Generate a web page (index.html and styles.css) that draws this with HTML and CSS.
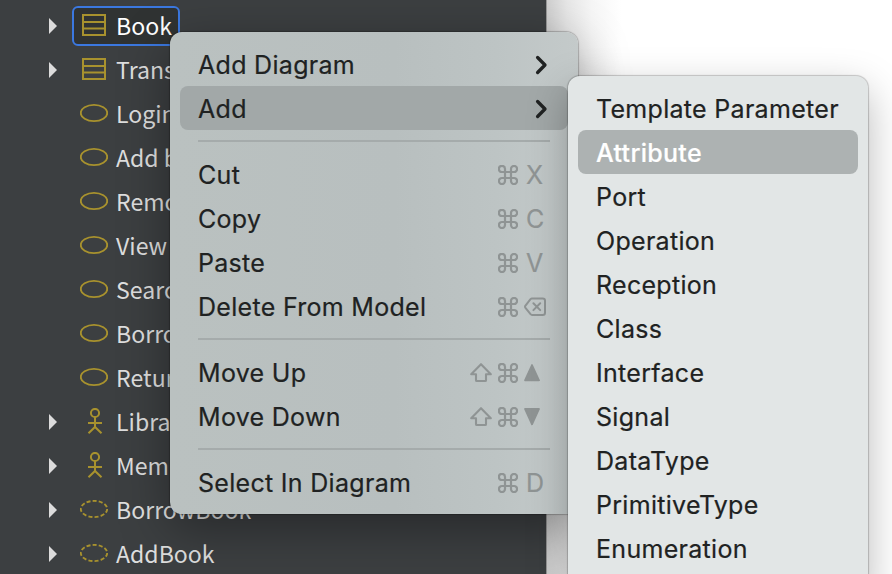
FILE: index.html
```html
<!DOCTYPE html>
<html lang="en">
<head>
<meta charset="utf-8">
<title>Model Explorer</title>
<link rel="stylesheet" href="styles.css">
</head>
<body>
<svg class="defs" aria-hidden="true">
  <symbol id="class" viewBox="0 0 28 28"><path d="M3 3H25V23H3ZM3 10H25M3 16.500H25" fill="none" stroke="currentColor" stroke-width="2"/></symbol>
  <symbol id="usecase" viewBox="0 0 28 28"><ellipse cx="14" cy="13" rx="13.200" ry="8.100" fill="none" stroke="currentColor" stroke-width="1.900"/></symbol>
  <symbol id="collab" viewBox="0 0 28 28"><ellipse cx="14" cy="13" rx="13.200" ry="8.100" fill="none" stroke="currentColor" stroke-width="1.900" stroke-dasharray="4 2.150"/></symbol>
  <symbol id="actor" viewBox="0 0 28 28"><g fill="none" stroke="currentColor" stroke-width="2"><circle cx="15" cy="5" r="4.100"/><path d="M15 9V19M8 15H22M8.500 25.300L15 19L21.500 25.300"/></g></symbol>
  <symbol id="cmd" viewBox="0 0 20 20"><path d="M7 7V3.900A3.050 3.050 0 1 0 3.950 7H16.050A3.050 3.050 0 1 0 13 3.950V16.050A3.050 3.050 0 1 0 16.050 13H3.950A3.050 3.050 0 1 0 7 16.050Z" fill="none" stroke="currentColor" stroke-width="2.200"/></symbol>
  <symbol id="shift" viewBox="0 0 22 20"><path d="M11 1.200L20.800 11.200H16V17.200Q16 18 15.200 18H6.800Q6 18 6 17.200V11.200H1.200Z" fill="none" stroke="currentColor" stroke-width="2.100" stroke-linejoin="round"/></symbol>
  <symbol id="del" viewBox="0 0 22 20"><path d="M8 1.400H18.700Q21 1.400 21 3.700V15.700Q21 18 18.700 18H8Q7.200 18 6.500 17.200L1.300 10.600Q.7 9.700 1.300 8.800L6.500 2.200Q7.200 1.400 8 1.400Z" fill="none" stroke="currentColor" stroke-width="2"/><path d="M9.400 6.300L16.200 13.100M16.200 6.300L9.400 13.100" stroke="currentColor" stroke-width="2" stroke-linecap="round"/></symbol>
  <symbol id="up" viewBox="0 0 16 20"><path d="M8 2L15 17.300H1Z" fill="currentColor" stroke="currentColor" stroke-linejoin="round" stroke-width="1.800"/></symbol>
  <symbol id="down" viewBox="0 0 16 20"><path d="M8 17.300L15 2H1Z" fill="currentColor" stroke="currentColor" stroke-linejoin="round" stroke-width="1.800"/></symbol>
  <symbol id="chev" viewBox="0 0 14 20"><path d="M3.600 2.500L11 10L3.600 17.500" fill="none" stroke="currentColor" stroke-width="3.300" stroke-linecap="round" stroke-linejoin="round"/></symbol>
</svg>
<div class="app">
  <div class="tree">
    <div class="row"><i class="arrow"></i><div class="node selected"><svg><use href="#class"/></svg><span>Book</span></div></div>
    <div class="row"><i class="arrow"></i><div class="node"><svg><use href="#class"/></svg><span>Trans</span></div></div>
    <div class="row"><i class="arrow leaf"></i><div class="node"><svg><use href="#usecase"/></svg><span>Login</span></div></div>
    <div class="row"><i class="arrow leaf"></i><div class="node"><svg><use href="#usecase"/></svg><span>Add b</span></div></div>
    <div class="row"><i class="arrow leaf"></i><div class="node"><svg><use href="#usecase"/></svg><span>Remo</span></div></div>
    <div class="row"><i class="arrow leaf"></i><div class="node"><svg><use href="#usecase"/></svg><span>View</span></div></div>
    <div class="row"><i class="arrow leaf"></i><div class="node"><svg><use href="#usecase"/></svg><span>Searc</span></div></div>
    <div class="row"><i class="arrow leaf"></i><div class="node"><svg><use href="#usecase"/></svg><span>Borro</span></div></div>
    <div class="row"><i class="arrow leaf"></i><div class="node"><svg><use href="#usecase"/></svg><span>Retur</span></div></div>
    <div class="row"><i class="arrow"></i><div class="node"><svg><use href="#actor"/></svg><span>Libra</span></div></div>
    <div class="row"><i class="arrow"></i><div class="node"><svg><use href="#actor"/></svg><span>Mem</span></div></div>
    <div class="row"><i class="arrow"></i><div class="node"><svg><use href="#collab"/></svg><span>BorrowBook</span></div></div>
    <div class="row"><i class="arrow"></i><div class="node"><svg><use href="#collab"/></svg><span>AddBook</span></div></div>
  </div>
  <div class="canvas"></div>
</div>

<div class="menu main">
  <div class="item"><span>Add Diagram</span><svg class="chev"><use href="#chev"/></svg></div>
  <div class="item open"><span>Add</span><svg class="chev"><use href="#chev"/></svg></div>
  <hr>
  <div class="item"><span>Cut</span><div class="keys"><svg class="cmd"><use href="#cmd"/></svg><b>X</b></div></div>
  <div class="item"><span>Copy</span><div class="keys"><svg class="cmd"><use href="#cmd"/></svg><b>C</b></div></div>
  <div class="item"><span>Paste</span><div class="keys"><svg class="cmd"><use href="#cmd"/></svg><b>V</b></div></div>
  <div class="item"><span>Delete From Model</span><div class="keys"><svg class="cmd"><use href="#cmd"/></svg><svg class="del"><use href="#del"/></svg></div></div>
  <hr>
  <div class="item"><span>Move Up</span><div class="keys"><svg class="shift"><use href="#shift"/></svg><svg class="cmd"><use href="#cmd"/></svg><svg class="tri"><use href="#up"/></svg></div></div>
  <div class="item"><span>Move Down</span><div class="keys"><svg class="shift"><use href="#shift"/></svg><svg class="cmd"><use href="#cmd"/></svg><svg class="tri"><use href="#down"/></svg></div></div>
  <hr>
  <div class="item"><span>Select In Diagram</span><div class="keys"><svg class="cmd"><use href="#cmd"/></svg><b>D</b></div></div>
</div>

<div class="menu sub">
  <div class="item"><span>Template Parameter</span></div>
  <div class="item active"><span>Attribute</span></div>
  <div class="item"><span>Port</span></div>
  <div class="item"><span>Operation</span></div>
  <div class="item"><span>Reception</span></div>
  <div class="item"><span>Class</span></div>
  <div class="item"><span>Interface</span></div>
  <div class="item"><span>Signal</span></div>
  <div class="item"><span>DataType</span></div>
  <div class="item"><span>PrimitiveType</span></div>
  <div class="item"><span>Enumeration</span></div>
</div>
</body>
</html>
```
FILE: styles.css
```css
* { box-sizing: border-box; }
body { margin: 0; width: 892px; height: 574px; overflow: hidden; position: relative; background: #fff; }
.defs { position: absolute; width: 0; height: 0; }
.app { display: flex; height: 574px; }
.tree {
  width: 546px; padding-top: 4px; overflow: hidden;
  background: #3c3f41; color: #dedede;
  font: 23.1px/44px "Noto Sans CJK SC", sans-serif;
}
.canvas { flex: 1; border-left: 1px solid #999; background: linear-gradient(90deg, #cfcfcf 0, #e6e6e6 20px, #f6f6f6 45px, #fff 75px); }
.row { display: flex; align-items: center; height: 44px; padding-left: 49px; }
.arrow { width: 8px; height: 16px; background: #dcdcdc; clip-path: polygon(0 0, 100% 50%, 0 100%); margin-right: 15px; }
.arrow.leaf { visibility: hidden; }
.node { display: flex; align-items: center; height: 40px; padding: 0 6px; border: 2px solid transparent; border-radius: 6px; white-space: nowrap; }
.node span { padding-bottom: 2px; }
.node svg { width: 28px; height: 28px; margin-right: 8px; color: #a8922e; flex: none; }
.selected { background: #303333; border-color: #3b78e0; color: #fff; width: 108px; }

.menu {
  position: absolute; padding: 10px;
  font: 25px/44px Inter, sans-serif; letter-spacing: .3px; color: #202222;
  -webkit-text-stroke: .2px;
}
.main {
  left: 170px; top: 32px; width: 408px; height: 482px; border-radius: 12px;
  background: linear-gradient(90deg, #bac1c0 0, #b8bfbf 55%, #bdc4c4 80%, #c4caca 100%);
  box-shadow: 0 0 1px 1px rgba(0,0,0,.22), 0 14px 50px rgba(0,0,0,.36);
}
.sub {
  left: 568px; top: 76px; width: 300px; height: 520px; border-radius: 12px;
  background: #e2e6e6;
  box-shadow: 0 0 1px 1px rgba(0,0,0,.2), 0 14px 40px rgba(0,0,0,.28);
}
.item { display: flex; justify-content: space-between; align-items: center; height: 44px; padding: 0 18px; border-radius: 8px; white-space: nowrap; }
.item span, .keys b { padding-top: 2px; }
.open { background: #a2a8a8; }
.active { background: #adb2b2; color: #fff; font-weight: 500; }
hr { height: 2px; margin: 10px 18px; border: 0; background: #a5abab; }
.chev { width: 14px; height: 20px; margin: 1px 2px 0 0; }
.keys { display: flex; align-items: center; height: 44px; color: #8f9494; }
.keys svg { margin-top: 1px; }
.keys b { width: 26px; padding-left: 2px; font-weight: 400; }
.cmd { width: 20px; height: 20px; margin-right: 6px; }
.shift { width: 22px; height: 20px; margin-right: 6px; }
.del { width: 22px; height: 20px; margin-right: 4px; }
.tri { width: 16px; height: 20px; margin-right: 10px; }
```
